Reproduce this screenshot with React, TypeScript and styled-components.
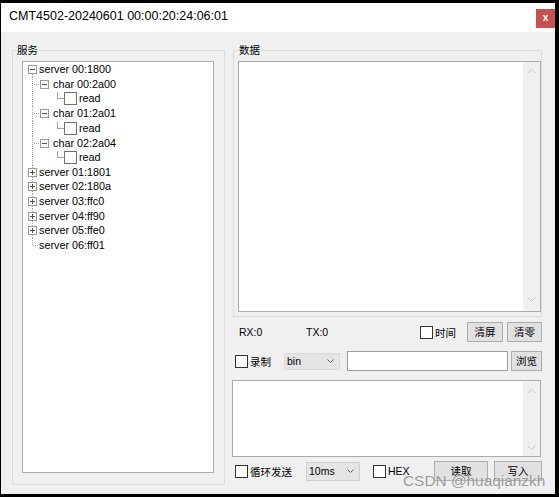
import React from 'react';
import styled, { createGlobalStyle } from 'styled-components';

const FONT = `"Liberation Sans", "Noto Sans CJK SC", sans-serif`;

const GlobalStyle = createGlobalStyle`
  html, body { margin: 0; padding: 0; background: #000; }
  body { width: 559px; height: 497px; overflow: hidden; }
  *, *::before, *::after { box-sizing: border-box; }
`;

const Frame = styled.div`
  position: relative;
  width: 559px;
  height: 497px;
  background: #000;
  padding: 3px 4px 3px 1px;
  display: flex;
  flex-direction: column;
  font-family: ${FONT};
  color: #000;
`;

const TitleBar = styled.div`
  height: 29px;
  flex: none;
  background: #fff;
  display: flex;
  align-items: flex-start;
  padding-left: 8px;
`;

const Title = styled.div`
  font-size: 12.5px;
  line-height: 26px;
  white-space: nowrap;
`;

const CloseButton = styled.div`
  margin: 6px 0 0 auto;
  width: 19px;
  height: 19px;
  background: #c75050;
  color: #fff;
  font-weight: bold;
  font-size: 10px;
  line-height: 18px;
  text-align: center;
`;

const Client = styled.div`
  flex: 1;
  background: #f0f0f0;
  display: grid;
  grid-template-columns: 213px 310px;
  column-gap: 7px;
  align-items: start;
  padding: 12px 0 9px 11px;
`;

const Group = styled.fieldset<{ $pad: string; $ml?: number }>`
  margin: 0 0 0 ${p => p.$ml ?? 0}px;
  min-width: 0;
  border: 1px solid #dcdcdc;
  padding: ${p => p.$pad};
`;

const Legend = styled.legend<{ $ml: number }>`
  font-size: 10.5px;
  line-height: 12px;
  padding: 0 1px;
  margin-left: ${p => p.$ml}px;
`;

const TreeBox = styled.div`
  height: 412px;
  background: #fff;
  border: 1px solid #abadb3;
`;

const TreeRow = styled.div<{ $h: number }>`
  display: flex;
  align-items: flex-start;
  height: ${p => p.$h}px;
  font-size: 10.8px;
  line-height: 15px;
  white-space: nowrap;
`;

const TreeCheck = styled.span`
  flex: none;
  width: 13px;
  height: 13px;
  margin: 1px 2px 0 0;
  background: #fff;
  border: 1px solid #707070;
`;

const RightCol = styled.div`
  display: flex;
  flex-direction: column;
`;

const TextBox = styled.div<{ $h: number; $w?: number }>`
  height: ${p => p.$h}px;
  width: ${p => (p.$w ? `${p.$w}px` : 'auto')};
  background: #fff;
  border: 1px solid #a9abb0;
  display: flex;
  justify-content: flex-end;
`;

const ScrollTrack = styled.div<{ $pt: number; $pb: number }>`
  width: 17px;
  background: #f0f0f0;
  display: flex;
  flex-direction: column;
  justify-content: space-between;
  align-items: center;
  padding: ${p => p.$pt}px 0 ${p => p.$pb}px;
`;

const Row = styled.div<{ $mt: number; $h?: number }>`
  display: flex;
  align-items: center;
  height: ${p => p.$h ?? 20}px;
  margin-top: ${p => p.$mt}px;
  font-size: 10.5px;
`;

const Cell = styled.div<{ $w: number; $ml?: number }>`
  flex: none;
  width: ${p => p.$w}px;
  margin-left: ${p => p.$ml ?? 0}px;
  display: flex;
  align-items: center;
  white-space: nowrap;
`;

const Box = styled.span`
  flex: none;
  width: 13px;
  height: 13px;
  background: #fff;
  border: 1px solid #333;
  margin-right: 2px;
`;

const Button = styled.div<{ $w: number; $ml?: number }>`
  flex: none;
  width: ${p => p.$w}px;
  height: 20px;
  margin-left: ${p => p.$ml ?? 0}px;
  background: #e1e1e1;
  border: 1px solid #adadad;
  font-size: 10.5px;
  line-height: 18px;
  text-align: center;
`;

const Select = styled.div<{ $w: number; $h: number; $border: string }>`
  flex: none;
  width: ${p => p.$w}px;
  height: ${p => p.$h}px;
  background: #e5e5e5;
  border: 1px solid ${p => p.$border};
  display: flex;
  align-items: center;
  justify-content: space-between;
  padding: 0 5px 0 2px;
  font-size: 10.5px;
`;

const Input = styled.div<{ $w: number; $ml: number }>`
  flex: none;
  width: ${p => p.$w}px;
  height: 20px;
  margin-left: ${p => p.$ml}px;
  background: #fff;
  border: 1px solid #9c9c9c;
`;

const Watermark = styled.div`
  position: absolute;
  left: 403px;
  top: 473px;
  font-family: "Liberation Sans", sans-serif;
  font-size: 15.4px;
  line-height: 16px;
  color: rgba(120, 120, 120, 0.75);
  text-shadow: 0 0 1px rgba(255, 255, 255, 0.7);
  white-space: nowrap;
  pointer-events: none;
`;

const Chevron = ({ up, color = '#c2c2c2' }: { up?: boolean; color?: string }) => (
  <svg width="9" height="5" viewBox="0 0 9 5">
    <polyline
      points={up ? '0.5,4.5 4.5,0.5 8.5,4.5' : '0.5,0.5 4.5,4.5 8.5,0.5'}
      fill="none"
      stroke={color}
      strokeWidth="1"
    />
  </svg>
);

const SmallChevron = () => (
  <svg width="7" height="4" viewBox="0 0 7 4">
    <polyline points="0.5,0.5 3.5,3.5 6.5,0.5" fill="none" stroke="#606060" strokeWidth="1" />
  </svg>
);

type Kind = 'root' | 'child' | 'leaf' | 'closed' | 'last';

const LINE = '#a6a6a6';
const BOX = '#9a9a9a';
const SIGN = '#505050';

const ExpandBox = ({ x, open }: { x: number; open: boolean }) => (
  <g>
    <rect x={x + 0.5} y={3.5} width={8} height={8} fill="#fff" stroke={BOX} />
    <line x1={x + 2} y1={7.5} x2={x + 7} y2={7.5} stroke={SIGN} />
    {!open && <line x1={x + 4.5} y1={5} x2={x + 4.5} y2={10} stroke={SIGN} />}
  </g>
);

const Gutter = ({ kind, h }: { kind: Kind; h: number }) => {
  const w = kind === 'child' ? 30 : kind === 'leaf' ? 41 : 16;
  return (
    <svg width={w} height={h} viewBox={`0 0 ${w} ${h}`} style={{ flex: 'none' }}>
      {kind === 'root' && <line x1={9.5} y1={12} x2={9.5} y2={h} stroke={LINE} strokeDasharray="1 1" />}
      {(kind === 'child' || kind === 'leaf' || kind === 'closed') && (
        <line x1={9.5} y1={0} x2={9.5} y2={h} stroke={LINE} strokeDasharray="1 1" />
      )}
      {kind === 'last' && (
        <>
          <line x1={9.5} y1={0} x2={9.5} y2={7.5} stroke={LINE} strokeDasharray="1 1" />
          <line x1={10} y1={7.5} x2={16} y2={7.5} stroke={LINE} strokeDasharray="1 1" />
        </>
      )}
      {kind === 'child' && (
        <>
          <line x1={11} y1={7.5} x2={17} y2={7.5} stroke={LINE} strokeDasharray="1 1" />
          <ExpandBox x={17} open />
        </>
      )}
      {kind === 'leaf' && (
        <>
          <line x1={34.5} y1={1} x2={34.5} y2={7.5} stroke={LINE} />
          <line x1={34} y1={7.5} x2={41} y2={7.5} stroke={LINE} />
        </>
      )}
      {kind === 'root' && <ExpandBox x={5} open />}
      {kind === 'closed' && <ExpandBox x={5} open={false} />}
    </svg>
  );
};

const treeRows: { label: string; kind: Kind; h: number }[] = [
  { label: 'server 00:1800', kind: 'root', h: 15 },
  { label: 'char 00:2a00', kind: 'child', h: 14 },
  { label: 'read', kind: 'leaf', h: 15 },
  { label: 'char 01:2a01', kind: 'child', h: 15 },
  { label: 'read', kind: 'leaf', h: 15 },
  { label: 'char 02:2a04', kind: 'child', h: 14 },
  { label: 'read', kind: 'leaf', h: 15 },
  { label: 'server 01:1801', kind: 'closed', h: 14 },
  { label: 'server 02:180a', kind: 'closed', h: 15 },
  { label: 'server 03:ffc0', kind: 'closed', h: 15 },
  { label: 'server 04:ff90', kind: 'closed', h: 14 },
  { label: 'server 05:ffe0', kind: 'closed', h: 15 },
  { label: 'server 06:ff01', kind: 'last', h: 15 },
];

export default function App() {
  return (
    <>
      <GlobalStyle />
      <Frame>
        <TitleBar>
          <Title>CMT4502-20240601 00:00:20:24:06:01</Title>
          <CloseButton>x</CloseButton>
        </TitleBar>
        <Client>
          <Group $pad="5px 10px 11px 9px">
            <Legend $ml={-6}>服务</Legend>
            <TreeBox>
              {treeRows.map((r, i) => (
                <TreeRow key={i} $h={r.h}>
                  <Gutter kind={r.kind} h={r.h} />
                  {r.kind === 'leaf' && <TreeCheck />}
                  <span>{r.label}</span>
                </TreeRow>
              ))}
            </TreeBox>
          </Group>
          <RightCol>
            <Group $pad="5px 0 4px 4px" $ml={1}>
              <Legend $ml={0}>数据</Legend>
              <TextBox $h={251}>
                <ScrollTrack $pt={7} $pb={9}>
                  <Chevron up />
                  <Chevron />
                </ScrollTrack>
              </TextBox>
            </Group>
            <Row $mt={5}>
              <Cell $w={67} $ml={7}>RX:0</Cell>
              <Cell $w={114}>TX:0</Cell>
              <Cell $w={47}>
                <Box />
                时间
              </Cell>
              <Button $w={36}>清屏</Button>
              <Button $w={35} $ml={4}>清零</Button>
            </Row>
            <Row $mt={9}>
              <Cell $w={49} $ml={3}>
                <Box />
                录制
              </Cell>
              <Select $w={56} $h={17} $border="#dadada">
                <span>bin</span>
                <SmallChevron />
              </Select>
              <Input $w={161} $ml={7} />
              <Button $w={31} $ml={3}>浏览</Button>
            </Row>
            <Row $mt={9} $h={77}>
              <TextBox $h={77} $w={309}>
                <ScrollTrack $pt={8} $pb={6}>
                  <Chevron up />
                  <Chevron />
                </ScrollTrack>
              </TextBox>
            </Row>
            <Row $mt={4}>
              <Cell $w={71} $ml={3}>
                <Box />
                循环发送
              </Cell>
              <Select $w={54} $h={19} $border="#cfcfcf">
                <span>10ms</span>
                <SmallChevron />
              </Select>
              <Cell $w={61} $ml={13}>
                <Box />
                HEX
              </Cell>
              <Button $w={54}>读取</Button>
              <Button $w={48} $ml={6}>写入</Button>
            </Row>
          </RightCol>
        </Client>
        <Watermark>CSDN @huaqianzkh</Watermark>
      </Frame>
    </>
  );
}
